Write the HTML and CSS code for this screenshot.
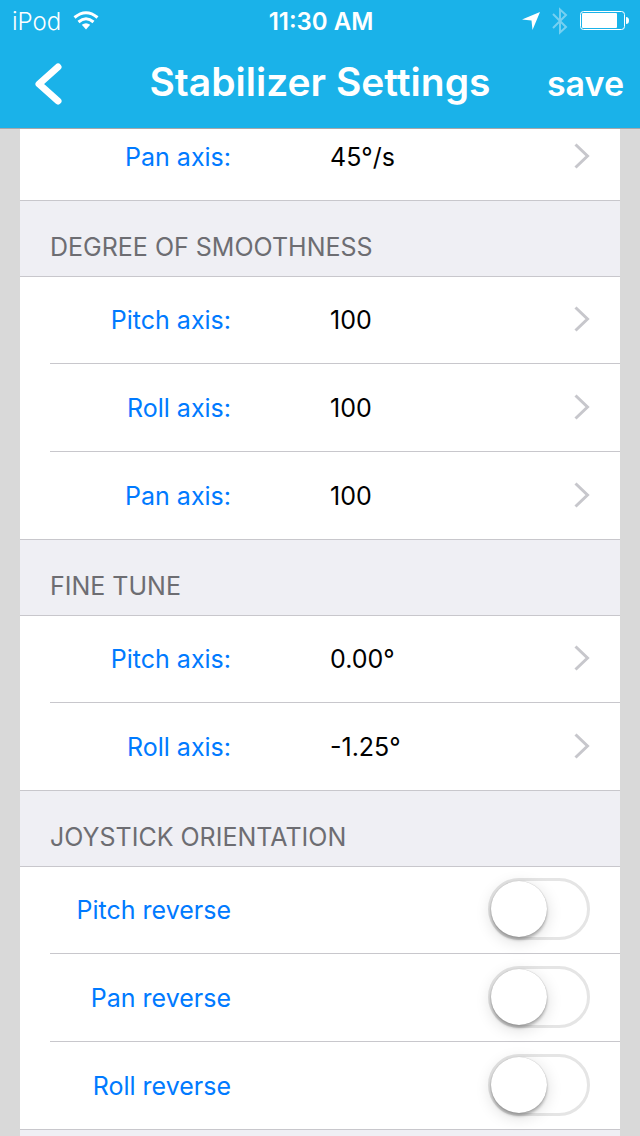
FILE: index.html
```html
<!DOCTYPE html>
<html lang="en">
  <head>
    <meta charset="utf-8">
    <meta name="viewport" content="width=device-width, initial-scale=1">
    <title>Stabilizer Settings</title>
    <link rel="stylesheet" href="styles.css">
  </head>
  <body>
    <header class="top">
      <div class="status">
        <div class="status-left">
          <span class="carrier">iPod</span>
          <svg class="wifi" width="26" height="20" viewBox="0 0 26 20">
            <g fill="none" stroke="#fff" stroke-width="3">
              <path d="M1.500 6.500Q13 -3 24.500 6.500"/>
              <path d="M5.500 11Q13 4.500 20.500 11"/>
            </g>
            <path fill="#fff" d="M8.800 13.800Q13 10.500 17.200 13.800L13 18.500z"/>
          </svg>
        </div>
        <time class="clock">11:30 AM</time>
        <div class="status-right">
          <svg width="18" height="18" viewBox="0 0 18 18">
            <path fill="#fff" d="M18 0L10.500 18L9.500 8.600L0 7.600z"/>
          </svg>
          <svg class="bluetooth" width="16" height="28" viewBox="0 0 16 28">
            <path fill="none" stroke="#fff" stroke-width="2" d="M1 7L14 20L8 25.500V2.500L14 8L1 21"/>
          </svg>
          <svg width="50" height="20" viewBox="0 0 50 20">
            <rect x="0.500" y="0.500" width="44" height="18" rx="3" fill="none" stroke="#fff"/>
            <rect x="2" y="2" width="35" height="15" rx="1" fill="#fff"/>
            <path fill="#fff" d="M46 6Q49 6 49 9.500T46 13z"/>
          </svg>
        </div>
      </div>
      <nav class="navbar">
        <button class="back" aria-label="Back">
          <svg width="30" height="44" viewBox="0 0 30 44">
            <path fill="none" stroke="#fff" stroke-width="7" stroke-linecap="round" stroke-linejoin="round" d="M26 6L7 23L26 40"/>
          </svg>
        </button>
        <h1>Stabilizer Settings</h1>
        <button class="save">save</button>
      </nav>
    </header>

    <main>
      <div class="group scrolled">
        <button class="row"><span class="name">Pan axis:</span><span class="value">45°/s</span><svg class="chevron" viewBox="0 0 16 26"><path d="M1.500 1.500L13.500 13L1.500 24.500"/></svg></button>
      </div>

      <h2>DEGREE OF SMOOTHNESS</h2>
      <div class="group">
        <button class="row"><span class="name">Pitch axis:</span><span class="value">100</span><svg class="chevron" viewBox="0 0 16 26"><path d="M1.500 1.500L13.500 13L1.500 24.500"/></svg></button>
        <button class="row"><span class="name">Roll axis:</span><span class="value">100</span><svg class="chevron" viewBox="0 0 16 26"><path d="M1.500 1.500L13.500 13L1.500 24.500"/></svg></button>
        <button class="row"><span class="name">Pan axis:</span><span class="value">100</span><svg class="chevron" viewBox="0 0 16 26"><path d="M1.500 1.500L13.500 13L1.500 24.500"/></svg></button>
      </div>

      <h2>FINE TUNE</h2>
      <div class="group">
        <button class="row"><span class="name">Pitch axis:</span><span class="value">0.00°</span><svg class="chevron" viewBox="0 0 16 26"><path d="M1.500 1.500L13.500 13L1.500 24.500"/></svg></button>
        <button class="row"><span class="name">Roll axis:</span><span class="value">-1.25°</span><svg class="chevron" viewBox="0 0 16 26"><path d="M1.500 1.500L13.500 13L1.500 24.500"/></svg></button>
      </div>

      <h2>JOYSTICK ORIENTATION</h2>
      <div class="group">
        <div class="row">
          <label class="name" for="pitch-reverse">Pitch reverse</label>
          <input class="switch" type="checkbox" role="switch" id="pitch-reverse">
        </div>
        <div class="row">
          <label class="name" for="pan-reverse">Pan reverse</label>
          <input class="switch" type="checkbox" role="switch" id="pan-reverse">
        </div>
        <div class="row">
          <label class="name" for="roll-reverse">Roll reverse</label>
          <input class="switch" type="checkbox" role="switch" id="roll-reverse">
        </div>
      </div>
    </main>
  </body>
</html>
```
FILE: styles.css
```css
* {
  box-sizing: border-box;
}
body {
  margin: 0;
  height: 100vh;
  display: flex;
  flex-direction: column;
  overflow: hidden;
  background: #d9d9d9;
  font-family: Inter, "Liberation Sans", sans-serif;
  font-size: 25px;
}
button {
  font: inherit;
  background: none;
  border: none;
  padding: 0;
  cursor: pointer;
}
svg {
  display: block;
  flex: none;
}

/* blue bar on top */
.top {
  position: relative;
  flex: none;
  background: #1ab2e9;
  border-bottom: 1px solid #a7a7aa;
  color: #fff;
}
.status {
  display: grid;
  grid-template-columns: 1fr auto 1fr;
  align-items: center;
  height: 42px;
  padding: 0 10px 0 12px;
  font-size: 24px;
}
.status-left,
.status-right {
  display: flex;
  align-items: center;
  gap: 12px;
}
.status-right {
  justify-content: flex-end;
}
.carrier {
  font-weight: 300;
}
.clock {
  font-weight: 600;
}
.bluetooth {
  opacity: 0.4;
}
.navbar {
  display: grid;
  grid-template-columns: 1fr auto 1fr;
  align-items: center;
  height: 86px;
  padding: 0 16px 4px;
}
.navbar h1 {
  margin: 0;
  padding-bottom: 4px;
  font-size: 39px;
  font-weight: 600;
}
.back {
  justify-self: start;
  padding-left: 16px;
}
.save {
  justify-self: end;
  color: #fff;
  font-size: 34px;
  font-weight: 600;
}

/* settings list */
main {
  flex: 1;
  min-height: 0;
  margin: 0 20px;
  overflow: hidden;
  background: #efeff4;
}
main h2 {
  margin: 0;
  padding: 31px 30px 14px;
  color: #6d6d72;
  font-size: 25px;
  font-weight: 400;
  line-height: 30px;
}
.group {
  background: #fff;
  border: solid #c8c7cc;
  border-width: 1px 0;
  padding-left: 30px;
}
/* first group is partly under the bar */
.scrolled {
  margin-top: -17px;
}
.row {
  display: flex;
  align-items: center;
  width: 100%;
  height: 88px;
  padding: 0 30px 2px 0;
  border-bottom: 1px solid #c8c7cc;
  text-align: left;
}
.row:first-child {
  height: 87px;
}
.row:last-child {
  height: 87px;
  border-bottom: none;
}
.name,
.value {
  line-height: 30px;
  padding-top: 2px;
}
.name {
  width: 181px;
  color: #007aff;
  text-align: right;
}
.value {
  flex: 1;
  margin-left: 99px;
  color: #000;
}
.chevron {
  width: 16px;
  height: 26px;
  fill: none;
  stroke: #c7c7cc;
  stroke-width: 3;
}
.switch {
  appearance: none;
  width: 102px;
  height: 62px;
  margin: 0 0 0 auto;
  border: 3px solid #e5e5e5;
  border-radius: 31px;
  background: #fff;
  cursor: pointer;
}
.switch::before {
  content: "";
  display: block;
  width: 56px;
  height: 56px;
  border-radius: 50%;
  background: #fff;
  box-shadow: 0 3px 3px rgba(0, 0, 0, 0.25), 0 4px 16px rgba(0, 0, 0, 0.15), 0 0 1px rgba(0, 0, 0, 0.3);
}
.switch:checked {
  border-color: #4cd964;
  background: #4cd964;
}
.switch:checked::before {
  margin-left: auto;
}
```
